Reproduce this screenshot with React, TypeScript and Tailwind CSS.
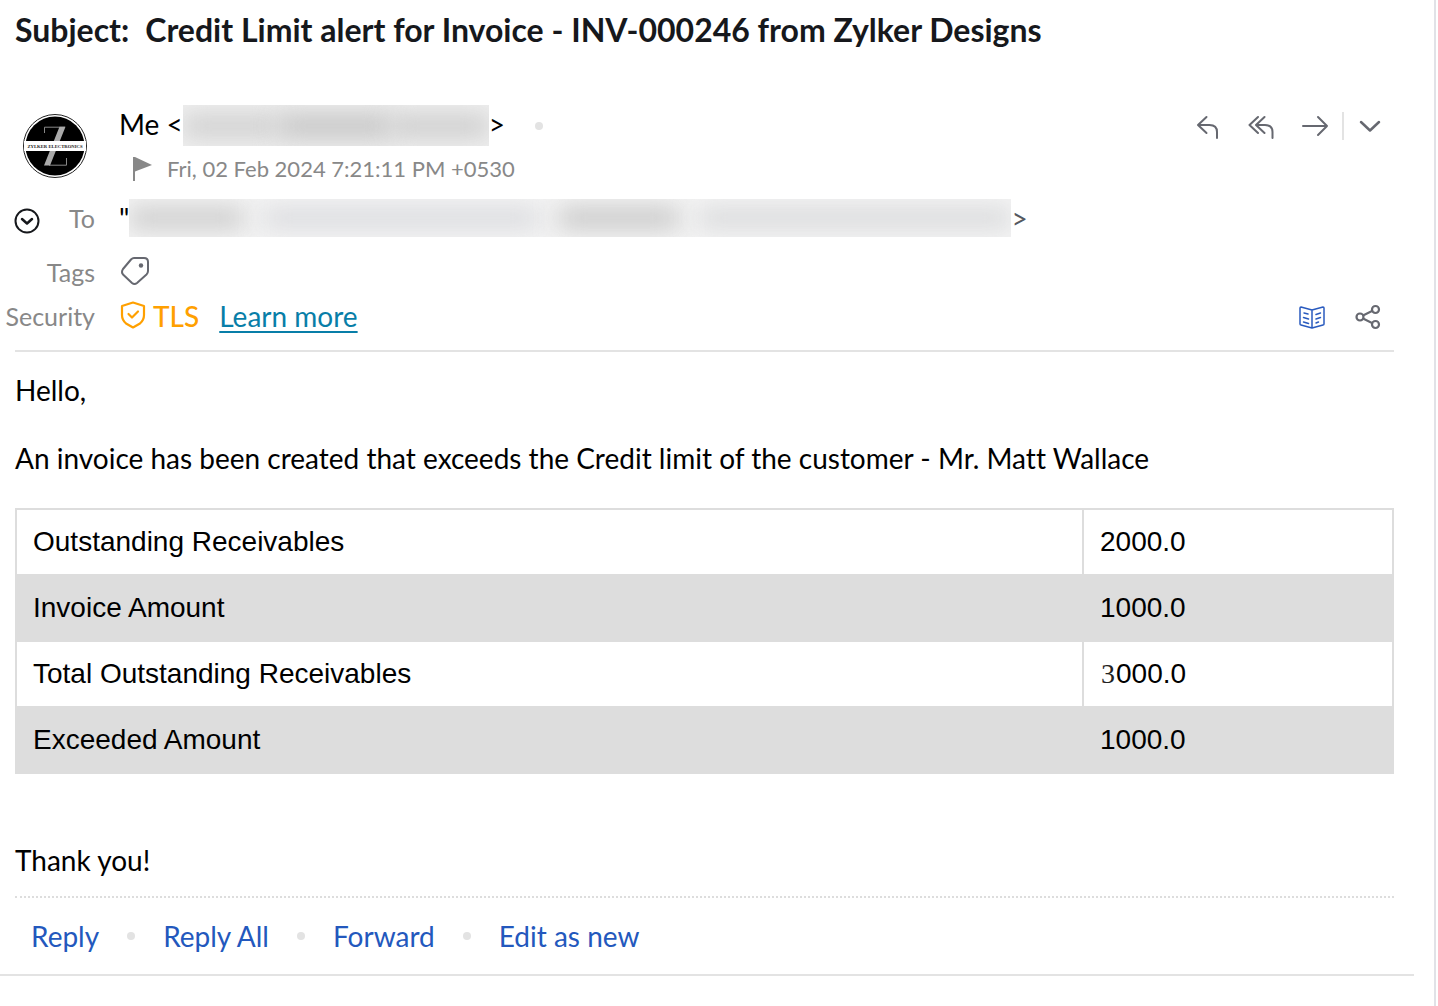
import type { ReactNode } from "react"

interface AmountRow {
  label: string
  value: ReactNode
}

const amounts: AmountRow[] = [
  { label: "Outstanding Receivables", value: "2000.0" },
  { label: "Invoice Amount", value: "1000.0" },
  {
    label: "Total Outstanding Receivables",
    value: (
      <>
        <span className="inline-block w-4 text-center font-['Liberation_Serif',serif] text-[#222]">3</span>000.0
      </>
    ),
  },
  { label: "Exceeded Amount", value: "1000.0" },
]

const actions = ["Reply", "Reply All", "Forward", "Edit as new"]

function Avatar() {
  return (
    <svg viewBox="0 0 64 64" className="h-16 w-16" role="img" aria-label="Zylker Electronics">
      <circle cx="32" cy="32" r="31.5" fill="#fff" stroke="#222" strokeWidth="1" />
      <circle cx="32" cy="32" r="29.5" fill="#000" />
      <path d="M21.5 19V13.2H42M26 51.2H43.500V44" fill="none" stroke="#888" strokeWidth="1" />
      <path d="M36.500 12.7H42.5L27 51.5H21Z" fill="#aaa" />
      <rect x="1" y="27" width="62" height="10" fill="#fff" />
      <text x="32" y="33.5" textAnchor="middle" fontSize="4.7" fontWeight="700" fontFamily="Liberation Serif, serif" fill="#222">
        ZYLKER ELECTRONICS
      </text>
    </svg>
  )
}

function IconButton({ label, children }: { label: string; children: ReactNode }) {
  return (
    <button type="button" aria-label={label} className="flex h-7 w-7 items-center justify-center text-[#666870]">
      <svg viewBox="0 0 28 28" className="h-7 w-7" fill="none" stroke="currentColor" strokeWidth="2" strokeLinecap="round" strokeLinejoin="round">
        {children}
      </svg>
    </button>
  )
}

function Dot() {
  return <span className="h-2 w-2 shrink-0 rounded-full bg-[#e3e3e3]" />
}

export default function App() {
  return (
    <div className="mr-0.5 min-h-screen border-r-2 border-[#e1e2e7] bg-white font-[Lato,sans-serif] text-[28px] leading-9 text-black [font-variant-ligatures:no-common-ligatures]">
      <header className="pr-10">
        <h1 className="flex gap-4 pt-2.5 pl-[15px] text-[32px] leading-10 font-bold text-[#16181c]">
          <span>Subject:</span>
          <span>Credit Limit alert for Invoice - INV-000246 from Zylker Designs</span>
        </h1>

        <div className="mt-[55px] flex">
          <div className="w-[119px] shrink-0 pt-[9px] pl-[23px]">
            <Avatar />
          </div>
          <div className="flex-1">
            <div className="flex h-[41px] items-center">
              <span className="pb-1">Me &lt;</span>
              <div className="flex h-full w-[306px] items-center overflow-hidden bg-[#efefef]">
                <span className="h-5 w-24 bg-[#cbcbcb] blur-md" />
                <span className="h-6 w-28 bg-[#c4c4c4] blur-md" />
                <span className="h-5 flex-1 bg-[#c8c8c8] blur-md" />
              </div>
              <span className="mr-[30px] pb-1">&gt;</span>
              <Dot />
            </div>
            <div className="mt-[3px] flex items-center gap-[15px] pl-[13px] text-[22px] leading-10 text-[#888]">
              <svg viewBox="0 0 20 26" className="h-[26px] w-5" fill="currentColor" aria-hidden="true">
                <path d="M1 1H3L20 9L3 15.5V25H1Z" />
              </svg>
              <time>Fri, 02 Feb 2024 7:21:11 PM +0530</time>
            </div>
          </div>
          <div className="flex h-[42px] items-center gap-[26px] pr-2.5">
            <IconButton label="Reply">
              <path d="M12.500 5L4 13L12.500 21M4.500 13H15.500Q23 13 23 20V26" />
            </IconButton>
            <IconButton label="Reply all">
              <path d="M10 5L1.500 13L10 21M16.500 5L8 13L16.500 21M8.500 13H17Q24.500 13 24.500 20V26" />
            </IconButton>
            <IconButton label="Forward">
              <path d="M1 14H25M16 5L25 14L16 23" />
            </IconButton>
            <div className="-mx-3.5 h-7 w-0.5 bg-[#e3e3e3]" />
            <IconButton label="More actions">
              <path d="M5 10L14 18.500L23 10" strokeWidth="2.500" />
            </IconButton>
          </div>
        </div>

        <div className="mt-2.5 flex h-[38px] items-center">
          <div className="flex w-[95px] items-center justify-between pl-[14px] text-[25px] text-[#888]">
            <button type="button" aria-label="Show details" className="pt-1.5 text-[#16181c]">
              <svg viewBox="0 0 26 26" className="h-[26px] w-[26px]" fill="none" stroke="currentColor" strokeWidth="2" strokeLinecap="round" strokeLinejoin="round">
                <circle cx="13" cy="13" r="11.500" />
                <path d="M8 11L13 15.500L18 11" strokeWidth="2.500" />
              </svg>
            </button>
            <span>To</span>
          </div>
          <span className="pl-6">"</span>
          <div className="flex h-full w-[882px] items-center overflow-hidden bg-[#f4f4f4]">
            <span className="h-5 w-[115px] bg-[#c8c8c8] blur-md" />
            <span className="ml-5 h-5 w-[275px] bg-[#d8d9dd] blur-md" />
            <span className="ml-5 h-5 w-30 bg-[#c4c4c4] blur-md" />
            <span className="ml-5 h-5 w-[312px] bg-[#d7d8da] blur-md" />
          </div>
          <span className="text-[#555860]">&gt;</span>
        </div>

        <div className="mt-[15px] flex h-[38px] items-center">
          <span className="w-[95px] pt-0.5 text-right text-[25px] text-[#888]">Tags</span>
          <button type="button" aria-label="Add tag" className="ml-[25px] text-[#666870]">
            <svg viewBox="0 0 30 30" className="h-[30px] w-[30px]" fill="none" stroke="currentColor" strokeWidth="2" strokeLinejoin="round">
              <path d="M14 2H24Q28 2 28 6V15Q28 17 26.500 18.500L17 27Q14.500 29 12 27L3 18.500Q1 16 3 13L11 3.500Q12.500 2 14 2Z" />
              <circle cx="21" cy="9.500" r="2.200" fill="currentColor" stroke="none" />
            </svg>
          </button>
        </div>

        <div className="mt-2 flex h-9 items-center">
          <span className="w-[95px] text-right text-[25px] text-[#888]">Security</span>
          <svg viewBox="0 0 26 30" className="ml-[25px] h-[30px] w-[26px] text-[#ffa000]" fill="none" stroke="currentColor" strokeWidth="2.2" strokeLinecap="round" strokeLinejoin="round" aria-hidden="true">
            <path d="M13 1.500L24 5V14Q24 19 20 22.500L13 26.500L6 22.500Q2 19 2 14V5Z" />
            <path d="M8.500 13L12 16.500L18 10.500" />
          </svg>
          <span className="ml-[7px] font-medium text-[#ffa000]">TLS</span>
          <a href="#tls" className="ml-5 text-[#087ea8] underline decoration-2 underline-offset-4">Learn more</a>
          <div className="ml-auto flex gap-7 pr-3">
            <button type="button" aria-label="Reader view" className="text-[#2a5bbf]">
              <svg viewBox="0 0 28 28" className="h-7 w-7" fill="none" stroke="currentColor" strokeWidth="1.500" strokeLinecap="round" strokeLinejoin="round">
                <path d="M14 8L3 5Q2 5 2 6V22Q2 23 3 23L14 26L25 23Q26 23 26 22V6Q26 5 25 5ZM14 8V26" />
                <path d="M6 11L10 12M5.500 15.500L10.500 17M5.500 20L10.500 21.500M18 12.500L22.500 11M18 17L22.500 15.500M18 21L20.500 20" />
              </svg>
            </button>
            <IconButton label="Share">
              <circle cx="6" cy="15" r="3.500" strokeWidth="2.200" />
              <circle cx="21.500" cy="7.500" r="3.500" strokeWidth="2.200" />
              <circle cx="21.500" cy="22.500" r="3.500" strokeWidth="2.200" />
              <path d="M10 13L18 9M10 17L18 21" />
            </IconButton>
          </div>
        </div>
      </header>

      <main className="mr-10 ml-[15px] mt-4 border-t-2 border-[#e3e3e3] pt-5">
        <p>Hello,</p>
        <p className="mt-8">An invoice has been created that exceeds the Credit limit of the customer - Mr. Matt Wallace</p>
        <table className="mt-8 w-full table-fixed border-collapse text-left font-['Liberation_Sans',sans-serif]">
          <tbody>
            {amounts.map((row) => (
              <tr key={row.label} className="h-[66px] even:bg-[#ddd]">
                <th scope="row" className="border-2 border-[#ddd] px-4 font-normal">{row.label}</th>
                <td className="w-[310px] border-2 border-[#ddd] px-4">{row.value}</td>
              </tr>
            ))}
          </tbody>
        </table>
        <p className="mt-[68px]">Thank you!</p>
      </main>

      <footer className="mr-5 border-b-2 border-[#e3e3e3] pl-[15px]">
        <div className="mt-[18px] mr-5 flex items-center gap-7 border-t-2 border-dotted border-[#ddd] px-4 py-5 text-[#2358bd]">
          {actions.map((action, i) => (
            <div key={action} className="flex items-center gap-7">
              {i > 0 && <Dot />}
              <button type="button">{action}</button>
            </div>
          ))}
        </div>
      </footer>
    </div>
  )
}
